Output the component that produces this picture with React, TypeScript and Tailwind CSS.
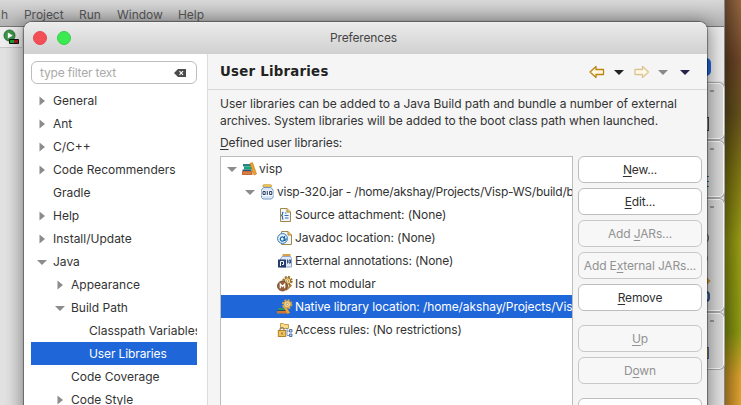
import React from "react";

const UI = "font-['Inter','Liberation_Sans',sans-serif]";

type Node = { label: string; depth: number; state?: "open" | "closed"; selected?: boolean };

const NAV: Node[] = [
  { label: "General", depth: 0, state: "closed" },
  { label: "Ant", depth: 0, state: "closed" },
  { label: "C/C++", depth: 0, state: "closed" },
  { label: "Code Recommenders", depth: 0, state: "closed" },
  { label: "Gradle", depth: 0 },
  { label: "Help", depth: 0, state: "closed" },
  { label: "Install/Update", depth: 0, state: "closed" },
  { label: "Java", depth: 0, state: "open" },
  { label: "Appearance", depth: 1, state: "closed" },
  { label: "Build Path", depth: 1, state: "open" },
  { label: "Classpath Variables", depth: 2 },
  { label: "User Libraries", depth: 2, selected: true },
  { label: "Code Coverage", depth: 1 },
  { label: "Code Style", depth: 1, state: "closed" },
];

const INDENT = ["pl-[5px]", "pl-[23px]", "pl-[41px]"];

function Twisty({ state }: { state?: "open" | "closed" }) {
  return (
    <svg width="12" height="12" viewBox="0 0 12 12" className="shrink-0">
      {state === "open" && <path d="M1 4h10L6 9z" fill="#8c8c8c" />}
      {state === "closed" && <path d="M3.500 1.500v9L9 6z" fill="#8c8c8c" />}
    </svg>
  );
}

function Sheet() {
  return (
    <>
      <path d="M4.500 1.500h6.500l3.500 3.500v9.500h-10z" fill="#eef5fd" stroke="#a3884e" />
      <path d="M11 1.500v3.500h3.500" fill="#f0c95c" stroke="#b28a35" />
    </>
  );
}

function Gear({ x, y, tooth = "#9a7128" }: { x: number; y: number; tooth?: string }) {
  return (
    <g transform={`translate(${x} ${y})`}>
      <circle r="3.900" fill="none" stroke={tooth} strokeWidth="2.600" strokeDasharray="1.800 1.260" />
      <circle r="3.200" fill="#f5dea0" stroke={tooth} />
      <circle r="1.200" fill="#fff" stroke="#9a7128" strokeWidth=".7" />
    </g>
  );
}

function BooksIcon() {
  return (
    <svg width="16" height="16" viewBox="0 0 16 16">
      <path d="M2 3h8v2.500H2z" fill="#2d8080" />
      <path d="M3 5.500h8v3H3z" fill="#15a57c" />
      <path d="M1.500 8.500h9V10h-9z" fill="#275c78" />
      <path d="M1 10h10.500v4H1z" fill="#c86a35" />
      <path d="M2 11.500h8v1H2z" fill="#e6935b" />
      <path d="M9 2.500l2.500-1L15.500 13 13 14z" fill="#efa329" stroke="#bf7616" strokeWidth=".6" />
    </svg>
  );
}

function JarIcon() {
  return (
    <svg width="16" height="16" viewBox="0 0 16 16">
      <rect x="4" y=".8" width="8.500" height="2.200" rx=".8" fill="#f7d66f" stroke="#c58a24" strokeWidth=".8" />
      <path d="M4.500 3.500h7.500l2 2.500v7.500l-1.500 1.500H4l-1.500-1.500V6z" fill="#d8e7f8" stroke="#7795c1" />
      <rect x="2.500" y="6.500" width="11.500" height="5.500" fill="#fff" opacity=".75" />
      <path d="M4 7.500h2.200v3H4zM8.300 7v4M10.600 7.500h2.200v3h-2.200z" fill="none" stroke="#263c64" />
    </svg>
  );
}

function SourceIcon() {
  return (
    <svg width="16" height="16" viewBox="0 0 16 16" className="shrink-0">
      <g transform="translate(-1 0)">
        <Sheet />
        <path d="M7.500 5.500h-1v2L5.500 8.500l1 1v2.500h1M9 6h1.500M8.500 8.500h4M9 11h3.500" fill="none" stroke="#3c6fae" strokeWidth="1.100" />
      </g>
    </svg>
  );
}

function JavadocIcon() {
  return (
    <svg width="16" height="16" viewBox="0 0 16 16" className="shrink-0">
      <Sheet />
      <circle cx="5.500" cy="8.500" r="4.900" fill="#e8f4ff" stroke="#2f76b0" strokeWidth="1" />
      <path d="M7.700 6 7 10.300q2 .5 2.200-2M7.200 8.300a2 2.200 0 1 1-3.800 0 2 2.200 0 0 1 3.800 0" fill="none" stroke="#1260a1" strokeWidth="1.200" />
    </svg>
  );
}

function AnnotationIcon() {
  return (
    <svg width="16" height="16" viewBox="0 0 16 16" className="shrink-0">
      <path d="M5.500 2h8" stroke="#d09a32" strokeWidth="1.800" />
      <path d="M5 3.500h8.500l1 2v8.500H3.500V6z" fill="#dceafa" stroke="#94a6c3" />
      <rect x="1" y="6.500" width="8" height="8" fill="#263d70" />
      <path d="M3.500 13V8.500H6.500v3H5" fill="none" stroke="#fff" />
      <path d="M10.500 6.500v4M12 7h1.500v3H12z" fill="none" stroke="#263d70" strokeWidth=".9" />
    </svg>
  );
}

function ModularIcon() {
  return (
    <svg width="16" height="16" viewBox="0 0 16 16" className="shrink-0">
      <path d="M9 14l5.500-5" stroke="#b48a50" strokeWidth="2" />
      <Gear x={10.5} y={5} />
      <circle cx="5.500" cy="10" r="5" fill="#94603b" stroke="#70401f" strokeWidth=".8" />
      <path d="M3.300 12.300V8L5.500 10.500 7.700 8v4.300" fill="none" stroke="#fff" strokeWidth="1.200" />
    </svg>
  );
}

function NativeIcon() {
  return (
    <svg width="16" height="16" viewBox="0 0 16 16" className="shrink-0">
      <path d="M1 9h7v2H1z" fill="#2c9271" />
      <path d="M0 11h9v1H0z" fill="#195166" />
      <path d="M0 12h10.500v2.500H0z" fill="#ce7736" />
      <path d="M5.500 6.500l2.500-1 5 8.500-2.500.7z" fill="#efa329" />
      <Gear x={10.2} y={5.3} tooth="#d9a646" />
    </svg>
  );
}

function AccessIcon() {
  return (
    <svg width="16" height="16" viewBox="0 0 16 16" className="shrink-0">
      <path d="M3.500 1.500h3l1 1h4v4h-8z" fill="#f7da8b" stroke="#c2943d" strokeWidth=".9" />
      <path d="M3 9V7.500a2 2 0 0 1 4 0V9" fill="none" stroke="#8b8064" strokeWidth="1.200" />
      <rect x="1.300" y="8.500" width="7.400" height="6" fill="#ecc35b" stroke="#aa7922" strokeWidth=".9" />
      <path d="M5 10.500v2" stroke="#765116" />
      <path d="M10 6v7.500h3M10 9h3" fill="none" stroke="#6183b3" strokeWidth=".8" />
      <path d="M12.500 7.500h2.500v2.500h-2.500zM12.500 12h2.500v2.500h-2.500z" fill="#bfd4ee" stroke="#48689f" strokeWidth=".9" />
    </svg>
  );
}

const LIBRARY = [
  { label: "Source attachment: (None)", Icon: SourceIcon, track: "tracking-[-0.06px]" },
  { label: "Javadoc location: (None)", Icon: JavadocIcon, track: "tracking-[-0.07px]" },
  { label: "External annotations: (None)", Icon: AnnotationIcon, track: "tracking-[-0.12px]" },
  { label: "Is not modular", Icon: ModularIcon, track: "tracking-[0px]" },
  { label: "Native library location: /home/akshay/Projects/Visp-WS", Icon: NativeIcon, track: "tracking-[-0.1px]", selected: true },
  { label: "Access rules: (No restrictions)", Icon: AccessIcon, track: "tracking-[-0.16px]" },
];

function Key({ text, at }: { text: string; at: number }) {
  return (
    <span>
      {text.slice(0, at)}
      <span className="underline decoration-1 underline-offset-2">{text[at]}</span>
      {text.slice(at + 1)}
    </span>
  );
}

function Button({ text, at, disabled }: { text: string; at: number; disabled?: boolean }) {
  return (
    <button
      className={`flex h-[27px] w-[124px] shrink-0 items-center justify-center rounded-[6px] border tracking-[-0.15px] whitespace-nowrap ${
        disabled ? "border-[#c8c8c8] bg-[#f7f7f7] text-[#929292]" : "border-[#bdbdbd] bg-white text-[#303030]"
      }`}
    >
      <Key text={text} at={at} />
    </button>
  );
}

function TitleBar() {
  return (
    <header className="relative flex h-8 items-center justify-center rounded-t-[8px] border-t border-[#efefef] bg-linear-to-b from-[#ebebeb] to-[#d0d0d0]">
      <div className="absolute left-[9px] top-[8px] flex gap-[10px]">
        <i className="size-[14px] rounded-full border border-[#e04850] bg-[#f34e56]" />
        <i className="size-[14px] rounded-full border border-[#36cf48] bg-[#3bea50]" />
      </div>
      <h1 className="pr-[4px] pb-[2px] text-[12px] tracking-[-0.15px] text-[#444]">Preferences</h1>
    </header>
  );
}

function Navigation() {
  return (
    <aside className="flex w-[184px] shrink-0 flex-col border-r border-[#dcdcdc] bg-white pt-[7px] pl-[7px]">
      <div className="flex h-[23px] w-[166px] shrink-0 items-center justify-between rounded-[6px] border border-[#bdbdbd] pl-2 pr-[10px] tracking-[-0.18px] text-[#aaa]">
        type filter text
        <svg width="12" height="8" viewBox="0 0 12 8">
          <path d="M4 0h8v8H4L0 4z" fill="#4b4b4b" />
          <path d="M5.500 2.200l3.500 3.600M9 2.200L5.500 5.800" stroke="#fff" strokeWidth="1.100" />
        </svg>
      </div>
      <ul className="mt-[5px] w-[166px] overflow-hidden">
        {NAV.map((n) => (
          <li key={n.label} className={`flex h-[23px] items-center ${n.selected ? "bg-[#1f66d8] tracking-[-0.12px] text-white" : ""}`}>
            <div className={`flex items-center gap-[5px] whitespace-nowrap ${INDENT[n.depth]}`}>
              <Twisty state={n.state} />
              <span>{n.label}</span>
            </div>
          </li>
        ))}
      </ul>
    </aside>
  );
}

function LibraryTree() {
  return (
    <div className="h-[260px] w-[353px] shrink-0 overflow-hidden border border-[#bdbdbd] bg-white whitespace-nowrap">
      <div className="flex h-[23px] items-center pl-[5px]">
        <Twisty state="open" />
        <span className="ml-[3px] mr-[2px]"><BooksIcon /></span>visp
      </div>
      <div className="flex h-[23px] items-center pl-[23px] tracking-[-0.22px]">
        <Twisty state="open" />
        <span className="ml-[3px] mr-[2px]"><JarIcon /></span>visp-320.jar - /home/akshay/Projects/Visp-WS/build/build
      </div>
      {LIBRARY.map(({ label, Icon, track, selected }) => (
        <div key={label} className={`flex h-[23px] items-center gap-[2px] pl-[56px] ${track} ${selected ? "bg-[#1f66d8] text-white" : ""}`}>
          <Icon />
          {label}
        </div>
      ))}
    </div>
  );
}

function PageToolbar() {
  return (
    <svg width="110" height="22" viewBox="0 0 110 22" className="mr-[8px]">
      <path d="M1 11l6-5.500v3h7.500v5H7v3z" fill="#fff7dc" stroke="#bd8315" strokeWidth="1.300" strokeLinejoin="round" />
      <path d="M25 9h10l-5 5z" fill="#222" />
      <path d="M59.500 11l-6-5.500v3H46v5h7.500v3z" fill="#fdf8ea" stroke="#dec58f" strokeWidth="1.300" strokeLinejoin="round" />
      <path d="M69 9h10l-5 5z" fill="#888" />
      <path d="M91 9h10l-5 5z" fill="#29214c" />
    </svg>
  );
}

function Preferences() {
  return (
    <section className="absolute top-[22px] left-[24px] flex h-[400px] w-[683px] flex-col rounded-t-[8px] bg-[#f5f5f5] shadow-[0_0_1px_1px_rgba(0,0,0,0.4),0_3px_18px_3px_rgba(0,0,0,0.4)]">
      <TitleBar />
      <div className="flex min-h-0 flex-1">
        <Navigation />
        <main className="min-w-0 flex-1">
          <div className="flex h-[36px] items-center justify-between border-b border-[#d8d8d8] pl-3">
            <h2 className="font-['DejaVu_Sans','Noto_Sans',sans-serif] text-[13.3px] font-bold tracking-[0.25px] text-[#222]">User Libraries</h2>
            <PageToolbar />
          </div>
          <div className="pl-3">
            <p className="pt-[5px] leading-[17px] tracking-[-0.03px] whitespace-nowrap">
              User libraries can be added to a Java Build path and bundle a number of external
              <br />
              <span className="tracking-[-0.07px]">archives. System libraries will be added to the boot class path when launched.</span>
            </p>
            <p className="mt-[5px] h-[21px] leading-[17px] tracking-[-0.12px]"><Key text="Defined user libraries:" at={0} /></p>
            <div className="flex gap-[5px] pt-[1px]">
              <LibraryTree />
              <div className="flex flex-col gap-[5px]">
                <Button text="New..." at={0} />
                <Button text="Edit..." at={0} />
                <Button text="Add JARs..." at={4} disabled />
                <Button text="Add External JARs..." at={5} disabled />
                <Button text="Remove" at={0} />
                <span className="h-[4px]" />
                <Button text="Up" at={0} disabled />
                <Button text="Down" at={1} disabled />
                <span className="h-[4px]" />
                <Button text="Import..." at={0} />
              </div>
            </div>
          </div>
        </main>
      </div>
    </section>
  );
}

function DockPanel({ size, children }: { size: string; children?: React.ReactNode }) {
  return (
    <div className={`relative w-[40px] shrink-0 rounded-[5px] border border-[#fafafa] bg-[#d9d9d9] shadow-[0_0_0_1px_#aaa] ${size}`}>
      <span className="absolute top-[6px] right-[9px] h-[2px] w-[4px] bg-[#999]" />
      {children}
    </div>
  );
}

function Workbench() {
  return (
    <div className="h-[405px] w-[725px] shrink-0 border-r border-[#888] bg-[#e2e2e2]">
      <nav className="flex h-[27px] items-start border-b border-[#777] bg-linear-to-b from-[#d8d8d8] to-[#b2b2b2] pt-[6px] tracking-[-0.05px] text-[#555]">
        <span className="w-[24px] pl-px">h</span>
        <span className="w-[55px]">Project</span>
        <span className="w-[38px]">Run</span>
        <span className="w-[61px]">Window</span>
        <span>Help</span>
      </nav>
      <div className="flex justify-between">
        <div className="h-[21px] w-[22px] border-b border-[#c8c8c8] bg-[#eee] pt-[2px] pl-[3px]">
          <svg width="17" height="16" viewBox="0 0 17 16">
            <circle cx="6.500" cy="6.500" r="5.500" fill="#3b9447" stroke="#287432" />
            <path d="M4.800 3.500v6l5-3z" fill="#fff" />
            <path d="M6.500 10.500h9v4h-9z" fill="#16a52c" stroke="#111" />
            <path d="M11 11h4v3h-4z" fill="#a31b20" />
          </svg>
        </div>
        <div className="flex flex-col items-end gap-[2px]">
          <div className="h-[54px] w-[38px] bg-[#ececec] pt-[31px]">
            <span className="block h-[18px] w-[25px] rounded-[5px] bg-[#1f66d8]" />
          </div>
          <DockPanel size="h-[56px]">
            <span className="absolute top-[33px] right-[14px] h-[14px] w-[8px] border border-l-0 border-[#444]" />
          </DockPanel>
          <DockPanel size="h-[56px]">
            <span className="absolute top-[34px] right-[14px] h-[11px] w-[8px] border-y border-[#277a9b]" />
            <span className="absolute top-[39px] right-[14px] h-px w-[8px] bg-[#277a9b]" />
          </DockPanel>
          <DockPanel size="h-[112px]">
            <span className="absolute top-[32px] right-[14px] size-[12px] rounded-full border border-[#555]" />
            <span className="absolute top-[54px] right-[15px] size-[9px] rounded-full border border-[#777]" />
            <span className="absolute top-[77px] right-[14px] size-[8px] rotate-45 bg-[#c39a3a]" />
            <span className="absolute top-[91px] right-[13px] h-[11px] w-[9px] rounded-sm border-2 border-[#315887] bg-[#b7d2eb]" />
          </DockPanel>
          <DockPanel size="h-[56px]">
            <span className="absolute top-[33px] right-[14px] h-[12px] w-[8px] border border-[#4d6ba0] bg-[#d1a33f]" />
          </DockPanel>
        </div>
      </div>
    </div>
  );
}

export default function App() {
  return (
    <div className={`relative flex h-[405px] w-[741px] overflow-hidden text-[12px] text-[#333] ${UI}`}>
      <Workbench />
      <div className="flex-1 bg-[linear-gradient(to_right,rgba(0,0,0,0.35),transparent),linear-gradient(to_bottom,#946640_0%,#6b4526_15%,#63501c_28%,#7d7412_42%,#979c12_60%,#8a9a10_82%,#d9a02a_93%,#e0a030_100%)]" />
      <Preferences />
    </div>
  );
}
